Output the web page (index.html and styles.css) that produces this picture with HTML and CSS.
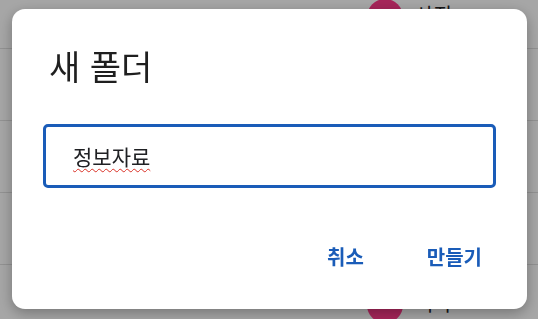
FILE: index.html
```html
<!DOCTYPE html>
<html lang="ko">
<head>
<meta charset="utf-8">
<title>새 폴더</title>
<link rel="stylesheet" href="styles.css">
</head>
<body>
<ul class="list">
  <li class="row"><span class="avatar"></span><span class="name">사진</span></li>
  <li class="row"><span class="avatar"></span></li>
  <li class="row"><span class="avatar"></span></li>
  <li class="row"><span class="avatar"></span></li>
  <li class="row"><span class="avatar"></span><span class="name">기타</span></li>
</ul>
<div class="scrim">
  <div class="dialog">
    <h1 class="title">새 폴더</h1>
    <div class="field"><span class="value">정보자료</span></div>
    <div class="actions">
      <button class="btn">취소</button>
      <button class="btn">만들기</button>
    </div>
  </div>
</div>
</body>
</html>
```
FILE: styles.css
```css
html, body {
  margin: 0;
  padding: 0;
  width: 538px;
  height: 319px;
  overflow: hidden;
  background: #ffffff;
  font-family: "Noto Sans CJK KR", "Noto Sans", Roboto, sans-serif;
}
.list {
  list-style: none;
  margin: -23px 0 0 0;
  padding: 0;
  height: 342px;
  overflow: hidden;
}
.row {
  height: 63px;
  padding-top: 8px;
  border-bottom: 1px solid #e0e0e0;
  display: flex;
  align-items: center;
  padding-left: 367px;
  gap: 12px;
}
.avatar {
  width: 36px;
  height: 36px;
  border-radius: 50%;
  background: #ff3a8a;
  flex: none;
}
.name {
  font-size: 20px;
  color: #202124;
  margin-bottom: 4px;
}
.scrim {
  position: fixed;
  inset: 0;
  background: rgba(0, 0, 0, 0.35);
  display: flex;
  padding: 9px 11px 10px 12px;
}
.dialog {
  flex: 1;
  background: #ffffff;
  border-radius: 13px;
  box-shadow: 0 4px 14px rgba(0, 0, 0, 0.3);
  padding: 37px 29px 30px 31px;
  display: flex;
  flex-direction: column;
}
.title {
  margin: 0 0 0 6px;
  font-size: 34px;
  line-height: 40px;
  font-weight: 400;
  color: #1f1f1f;
}
.field {
  margin-top: 38px;
  margin-right: 2px;
  height: 58px;
  border: 3px solid #1a5cb8;
  border-radius: 5px;
  display: flex;
  align-items: center;
  padding-left: 27px;
}
.value {
  font-size: 21px;
  color: #202124;
  text-decoration: underline wavy #d93025;
  text-decoration-thickness: 1px;
  text-underline-offset: 3px;
}
.actions {
  margin-top: 46px;
  display: flex;
  justify-content: flex-end;
  gap: 31px;
}
.btn {
  font-family: inherit;
  background: none;
  border: none;
  height: 44px;
  padding: 0 16px;
  font-size: 20px;
  font-weight: 600;
  color: #1a5cb8;
}
```
